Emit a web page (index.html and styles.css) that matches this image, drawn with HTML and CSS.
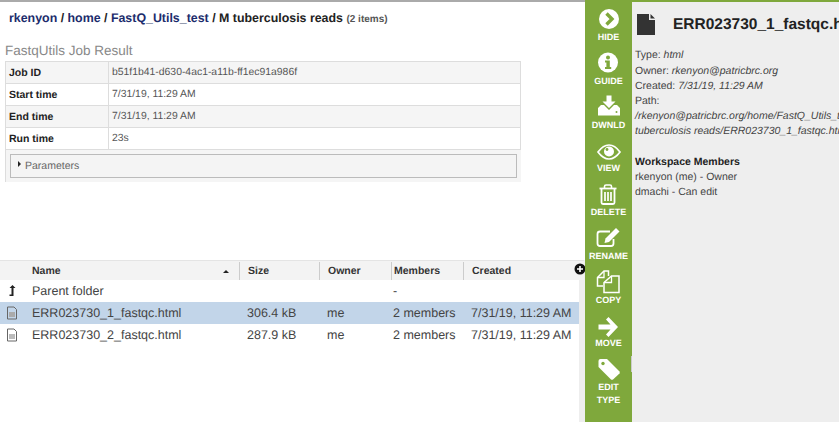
FILE: index.html
```html
<!DOCTYPE html>
<html lang="en">
<head>
    <meta charset="UTF-8">
    <meta name="viewport" content="width=device-width, initial-scale=1.0">
    <title>FastqUtils Job Result</title>
    <link rel="stylesheet" href="styles.css">
</head>
<body>
    <div class="main">
        <div class="top-pane">
            <div class="breadcrumb">
                <a>rkenyon</a> / <a>home</a> / <a>FastQ_Utils_test</a> / <b>M tuberculosis reads</b> <span class="count">(2 items)</span>
            </div>
            <h3 class="job-title">FastqUtils Job Result</h3>
            <div class="job-panel">
                <table class="job-table">
                    <tr><th>Job ID</th><td>b51f1b41-d630-4ac1-a11b-ff1ec91a986f</td></tr>
                    <tr><th>Start time</th><td>7/31/19, 11:29 AM</td></tr>
                    <tr><th>End time</th><td>7/31/19, 11:29 AM</td></tr>
                    <tr><th>Run time</th><td>23s</td></tr>
                </table>
                <div class="params-wrap">
                    <div class="params"><span class="caret"></span>Parameters</div>
                </div>
            </div>
        </div>

        <div class="grid">
            <div class="grid-row grid-head">
                <div class="c-icon"></div>
                <div class="c-name">Name<span class="sort"></span></div>
                <div class="c-size">Size</div>
                <div class="c-owner">Owner</div>
                <div class="c-members">Members</div>
                <div class="c-created">Created</div>
            </div>
            <div class="grid-row">
                <div class="c-icon">
                    <svg width="12" height="14" viewBox="0 0 12 14"><path d="M6.500 1 L9.500 4 H7.500 V11 H5.500 V4 H3.500 Z M3.500 10.500 H7.500 V12 H3.500 Z" fill="#222"/></svg>
                </div>
                <div class="c-name">Parent folder</div>
                <div class="c-size"></div>
                <div class="c-owner"></div>
                <div class="c-members">-</div>
                <div class="c-created"></div>
            </div>
            <div class="grid-row selected">
                <div class="c-icon">
                    <svg width="12" height="14" viewBox="0 0 12 14"><path d="M1.500 1 H8 L10.500 3.500 V13 H1.500 Z" fill="none" stroke="#666"/><path d="M3 6 H9 V11 H3 Z" fill="#aaa"/></svg>
                </div>
                <div class="c-name">ERR023730_1_fastqc.html</div>
                <div class="c-size">306.4 kB</div>
                <div class="c-owner">me</div>
                <div class="c-members">2 members</div>
                <div class="c-created">7/31/19, 11:29 AM</div>
            </div>
            <div class="grid-row">
                <div class="c-icon">
                    <svg width="12" height="14" viewBox="0 0 12 14"><path d="M1.500 1 H8 L10.500 3.500 V13 H1.500 Z" fill="none" stroke="#666"/><path d="M3 6 H9 V11 H3 Z" fill="#bbb"/></svg>
                </div>
                <div class="c-name">ERR023730_2_fastqc.html</div>
                <div class="c-size">287.9 kB</div>
                <div class="c-owner">me</div>
                <div class="c-members">2 members</div>
                <div class="c-created">7/31/19, 11:29 AM</div>
            </div>
            <svg class="add-col" width="12" height="12" viewBox="0 0 12 12"><circle cx="6" cy="6" r="5.500" fill="#111"/><path d="M6 3 V9 M3 6 H9" stroke="#fff" stroke-width="1.600"/></svg>
        </div>
    </div>

    <div class="actions">
        <div class="action">
            <svg class="action-icon" viewBox="0 0 24 22"><circle cx="12" cy="10" r="10" fill="#fff"/><path d="M9.500 4.500 L15 10 L9.500 15.500" fill="none" stroke="#7fa83c" stroke-width="3.400"/></svg>
            <span>HIDE</span>
        </div>
        <div class="action">
            <svg class="action-icon" viewBox="0 0 24 22"><circle cx="12" cy="9.500" r="10" fill="#fff"/><circle cx="12" cy="4.500" r="2" fill="#7fa83c"/><path d="M9 7.500 H13.800 V14 H15.200 V16 H9 V14 H10.400 V9.500 H9 Z" fill="#7fa83c"/></svg>
            <span>GUIDE</span>
        </div>
        <div class="action">
            <svg class="action-icon" viewBox="0 0 24 22"><path d="M9.500 -1.500 H14.500 V4.500 H18.500 L12 11 L5.500 4.500 H9.500 Z" fill="#fff"/><path d="M1 11 L4 8 H7 L12 13 L17 8 H20 L23 11 V18.500 H1 Z" fill="#fff"/><circle cx="19.500" cy="15" r="1" fill="#7fa83c"/></svg>
            <span>DWNLD</span>
        </div>
        <div class="action">
            <svg class="action-icon" viewBox="0 0 24 22"><path d="M1 12 C5 6.500 9 5 12 5 C15 5 19 6.500 23 12 C19 17.500 15 19 12 19 C9 19 5 17.500 1 12 Z" fill="none" stroke="#fff" stroke-width="1.700"/><circle cx="12" cy="11.500" r="5" fill="#fff"/><circle cx="10" cy="9.500" r="1.400" fill="#7fa83c"/></svg>
            <span>VIEW</span>
        </div>
        <div class="action">
            <svg class="action-icon" viewBox="0 0 24 22"><path d="M3.500 4.500 H20.500" stroke="#fff" stroke-width="1.800"/><path d="M8.500 4 V2.500 Q8.500 1 10 1 H14 Q15.500 1 15.500 2.500 V4" fill="none" stroke="#fff" stroke-width="1.600"/><path d="M5.500 4.500 V18.500 Q5.500 20 7 20 H17 Q18.500 20 18.500 18.500 V4.500" fill="none" stroke="#fff" stroke-width="1.800"/><path d="M9 8 V17 M12 8 V17 M15 8 V17" stroke="#fff" stroke-width="1.700"/></svg>
            <span>DELETE</span>
        </div>
        <div class="action">
            <svg class="action-icon" viewBox="0 0 24 22"><path d="M17.500 11 V15.500 Q17.500 18 15 18 H4 Q1.500 18 1.500 15.500 V6 Q1.500 3.500 4 3.500 H14" fill="none" stroke="#fff" stroke-width="1.800"/><path d="M20 0 L23.500 3.500 L13 14 L8.500 15 L9.500 10.500 Z" fill="#fff"/></svg>
            <span>RENAME</span>
        </div>
        <div class="action">
            <svg class="action-icon" viewBox="0 0 24 22"><path d="M12.500 4 V-1 H8 L1.500 5.500 V14 H7" fill="none" stroke="#fff" stroke-width="1.500"/><path d="M8 -1 V5.500 H1.500" fill="none" stroke="#fff" stroke-width="1.300"/><path d="M15.500 4 H23 V20.500 H8 V10.500 Z" fill="none" stroke="#fff" stroke-width="1.500"/><path d="M15.500 4 V10.500 H8" fill="none" stroke="#fff" stroke-width="1.300"/></svg>
            <span>COPY</span>
        </div>
        <div class="action">
            <svg class="action-icon" viewBox="0 0 24 22"><path d="M12.500 2 L22 12 L12.500 22 L10 19.500 L14.500 14.500 H2.500 V9.500 H14.500 L10 4.500 Z" fill="#fff"/></svg>
            <span>MOVE</span>
        </div>
        <div class="action">
            <svg class="action-icon" viewBox="0 0 24 22"><path d="M1.500 2 Q1.500 0 3.500 0 H10 L22.500 12.500 Q23 13.500 22.500 14.500 L16 20.500 Q15 21.200 14 20.500 L1.500 8 Z" fill="#fff"/><circle cx="6" cy="4.500" r="1.700" fill="#7fa83c"/></svg>
            <span>EDIT<br>TYPE</span>
        </div>
        <div class="bar-thumb"></div>
    </div>

    <div class="details">
        <div class="details-head">
            <svg class="file-icon" width="18" height="21" viewBox="0 0 18 21"><path d="M0 0 H12 V6 H18 V21 H0 Z M13.500 0 L18 4.500 H13.500 Z" fill="#333"/></svg>
            <span class="details-title">ERR023730_1_fastqc.html</span>
        </div>
        <div class="details-body">
            <div class="type-line">Type: <i>html</i></div>
            <div>Owner: <i>rkenyon@patricbrc.org</i></div>
            <div>Created: <i>7/31/19, 11:29 AM</i></div>
            <div>Path:</div>
            <div class="path"><i>/rkenyon@patricbrc.org/home/FastQ_Utils_test/M<br>tuberculosis reads/ERR023730_1_fastqc.html</i></div>
            <div class="members-title">Workspace Members</div>
            <div>rkenyon (me) - Owner</div>
            <div>dmachi - Can edit</div>
        </div>
    </div>
</body>
</html>
```

FILE: styles.css
```css
html, body {
    height: 100%;
}
body {
    margin: 0;
    display: flex;
    height: 422px;
    overflow: hidden;
    font-family: "Liberation Sans", Arial, sans-serif;
    font-size: 11px;
    color: #333;
    background: #fff;
    text-rendering: geometricPrecision;
}
.main {
    width: 585px;
    height: 422px;
    flex-shrink: 0;
    display: flex;
    flex-direction: column;
    border-top: 2px solid #aaa;
    box-sizing: border-box;
}
.top-pane {
    height: 258px;
    flex-shrink: 0;
}
.breadcrumb {
    padding: 9px 0 0 9px;
    font-size: 12.400px;
    font-weight: bold;
    line-height: 15px;
    color: #222;
}
.breadcrumb a {
    color: #1c2c6c;
}
.breadcrumb b {
    color: #222;
}
.count {
    font-size: 10px;
    color: #555;
}
.job-title {
    margin: 16px 0 0 5px;
    font-size: 13.500px;
    font-weight: normal;
    line-height: 16px;
    color: #888;
}
.job-panel {
    margin: 2px 0 0 5px;
    width: 516px;
    background: #f5f5f5;
}
.job-table {
    width: 100%;
    border-collapse: collapse;
    table-layout: fixed;
}
.job-table th, .job-table td {
    height: 22px;
    padding: 0 3px;
    border: 1px solid #ddd;
    font-size: 10.500px;
    box-sizing: border-box;
    text-align: left;
}
.job-table th {
    width: 103px;
    color: #222;
}
.job-table td {
    color: #555;
    font-size: 10.400px;
}
.job-table tr:nth-child(even) th, .job-table tr:nth-child(even) td {
    background: #fff;
}
.params-wrap {
    padding: 4px;
    border-left: 1px solid #ddd;
}
.params {
    height: 24px;
    line-height: 22px;
    box-sizing: border-box;
    border: 1px solid #bbb;
    background: #f4f4f4;
    color: #666;
    font-size: 10.500px;
    padding-left: 7px;
}
.caret {
    display: inline-block;
    border-left: 3px solid #222;
    border-top: 3px solid transparent;
    border-bottom: 3px solid transparent;
    margin-right: 4px;
    vertical-align: 2px;
}
.grid {
    position: relative;
    flex: 1;
    background: linear-gradient(to right, #fff 579px, #eee 579px);
}
.grid-row {
    display: flex;
    height: 22px;
    width: 579px;
    align-items: center;
    font-size: 12.500px;
    color: #444;
}
.grid-head {
    height: 20px;
    width: 584px;
    background: #f3f3f3;
    border-top: 1px solid #e4e4e4;
    box-sizing: border-box;
    padding-top: 1px;
    font-size: 10.500px;
    font-weight: bold;
    color: #333;
}
.selected {
    background: #c2d5e9;
}
.c-icon {
    width: 32px;
    flex-shrink: 0;
    display: flex;
    padding-left: 6px;
    box-sizing: border-box;
}
.c-name {
    width: 207px;
    flex-shrink: 0;
    position: relative;
}
.c-size {
    width: 80px;
    flex-shrink: 0;
    padding-left: 8px;
    box-sizing: border-box;
}
.c-owner {
    width: 72px;
    flex-shrink: 0;
    padding-left: 8px;
    box-sizing: border-box;
}
.c-members {
    width: 72px;
    flex-shrink: 0;
    padding-left: 2px;
    box-sizing: border-box;
}
.c-created {
    flex: 1;
    padding-left: 8px;
    white-space: nowrap;
}
.grid-head .c-size, .grid-head .c-owner, .grid-head .c-members, .grid-head .c-created {
    border-left: 1px solid #ccc;
    line-height: 18px;
}
.sort {
    position: absolute;
    right: 10px;
    top: 5px;
    border-bottom: 3px solid #222;
    border-left: 3px solid transparent;
    border-right: 3px solid transparent;
}
.add-col {
    position: absolute;
    left: 574px;
    top: 3px;
}
.actions {
    position: relative;
    width: 47px;
    height: 422px;
    flex-shrink: 0;
    background: #7fa83c;
    display: flex;
    flex-direction: column;
    align-items: center;
    padding-top: 9px;
    box-sizing: border-box;
    color: #fff;
}
.action {
    height: 43.750px;
    flex-shrink: 0;
    display: flex;
    flex-direction: column;
    align-items: center;
    font-size: 9px;
    font-weight: bold;
    text-align: center;
    white-space: nowrap;
}
.action-icon {
    width: 24px;
    height: 22px;
    flex-shrink: 0;
    overflow: visible;
}
.action span {
    line-height: 13px;
}
.bar-thumb {
    position: absolute;
    right: 0;
    top: 356px;
    width: 1px;
    height: 16px;
    background: #ccc;
}
.details {
    flex: 1;
    min-width: 0;
    height: 422px;
    box-sizing: border-box;
    background: #eee;
    border-top: 2px solid #7fa83c;
    overflow: hidden;
    padding: 12px 0 0 3px;
}
.details-head {
    display: flex;
    align-items: center;
    gap: 18px;
    padding-left: 2px;
    white-space: nowrap;
}
.file-icon {
    flex-shrink: 0;
}
.details-title {
    font-size: 15.500px;
    font-weight: bold;
    color: #222;
}
.details-body {
    margin-top: 13px;
    font-size: 10.500px;
    line-height: 15px;
    color: #444;
    white-space: nowrap;
}
.type-line {
    margin-bottom: 1px;
}
.members-title {
    margin-top: 16px;
    font-weight: bold;
    color: #222;
}
```
